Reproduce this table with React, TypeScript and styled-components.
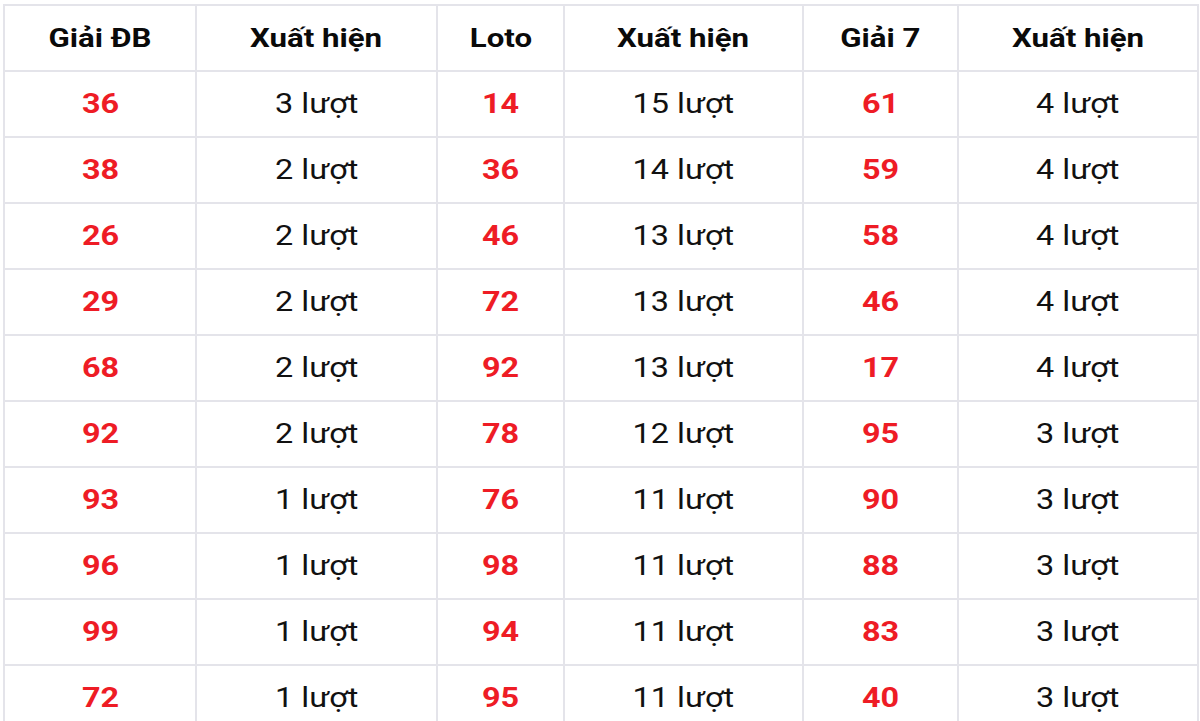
import styled, {createGlobalStyle} from "styled-components";

type Row = {db: string; dbCount: number; loto: string; lotoCount: number; g7: string; g7Count: number};

const rows: Row[] = [
    {db: "36", dbCount: 3, loto: "14", lotoCount: 15, g7: "61", g7Count: 4},
    {db: "38", dbCount: 2, loto: "36", lotoCount: 14, g7: "59", g7Count: 4},
    {db: "26", dbCount: 2, loto: "46", lotoCount: 13, g7: "58", g7Count: 4},
    {db: "29", dbCount: 2, loto: "72", lotoCount: 13, g7: "46", g7Count: 4},
    {db: "68", dbCount: 2, loto: "92", lotoCount: 13, g7: "17", g7Count: 4},
    {db: "92", dbCount: 2, loto: "78", lotoCount: 12, g7: "95", g7Count: 3},
    {db: "93", dbCount: 1, loto: "76", lotoCount: 11, g7: "90", g7Count: 3},
    {db: "96", dbCount: 1, loto: "98", lotoCount: 11, g7: "88", g7Count: 3},
    {db: "99", dbCount: 1, loto: "94", lotoCount: 11, g7: "83", g7Count: 3},
    {db: "72", dbCount: 1, loto: "95", lotoCount: 11, g7: "40", g7Count: 3},
];

const columns = [
    {title: "Giải ĐB", width: 192},
    {title: "Xuất hiện", width: 241},
    {title: "Loto", width: 127},
    {title: "Xuất hiện", width: 239},
    {title: "Giải 7", width: 155},
    {title: "Xuất hiện", width: 240},
];

export default function App() {
    return (
        <>
            <GlobalStyle/>
            <Page>
                <Table>
                    <colgroup>
                        {columns.map((c, i) => <col key={i} style={{width: c.width}}/>)}
                    </colgroup>
                    <thead>
                        <tr>
                            {columns.map((c, i) => (
                                <Head key={i}><Wide>{c.title}</Wide></Head>
                            ))}
                        </tr>
                    </thead>
                    <tbody>
                        {rows.map((r, i) => (
                            <tr key={i}>
                                <Num><Wide>{r.db}</Wide></Num>
                                <Cell><Wide>{r.dbCount} lượt</Wide></Cell>
                                <Num><Wide>{r.loto}</Wide></Num>
                                <Cell><Wide>{r.lotoCount} lượt</Wide></Cell>
                                <Num><Wide>{r.g7}</Wide></Num>
                                <Cell><Wide>{r.g7Count} lượt</Wide></Cell>
                            </tr>
                        ))}
                    </tbody>
                </Table>
            </Page>
        </>
    );
}

const GlobalStyle = createGlobalStyle`
    html, body {
        margin: 0;
        padding: 0;
        background: #fff;
    }

    body {
        font-family: Roboto, "Liberation Sans", sans-serif;
        color: #111;
    }
`;

const Page = styled.div`
    padding: 4px 3px 0;
    height: 721px;
    overflow: hidden;
    box-sizing: border-box;
`;

const Table = styled.table`
    width: 1194px;
    border-collapse: collapse;
    table-layout: fixed;
    border: 2px solid #e4e4ea;
`;

// the source table is rendered slightly stretched sideways
const Wide = styled.span`
    display: inline-block;
    transform: scaleX(1.2);
    white-space: nowrap;
`;

const Head = styled.th`
    height: 64px;
    padding: 0;
    border: 2px solid #e4e4ea;
    font-size: 26px;
    font-weight: 700;
    text-align: center;
    vertical-align: middle;
    color: #0a0a0a;
`;

const Cell = styled.td`
    height: 64px;
    padding: 0;
    border: 2px solid #e4e4ea;
    font-size: 27px;
    font-weight: 400;
    text-align: center;
    vertical-align: middle;
    color: #111;
`;

const Num = styled(Cell)`
    font-weight: 700;
    color: #ee1c25;
`;
